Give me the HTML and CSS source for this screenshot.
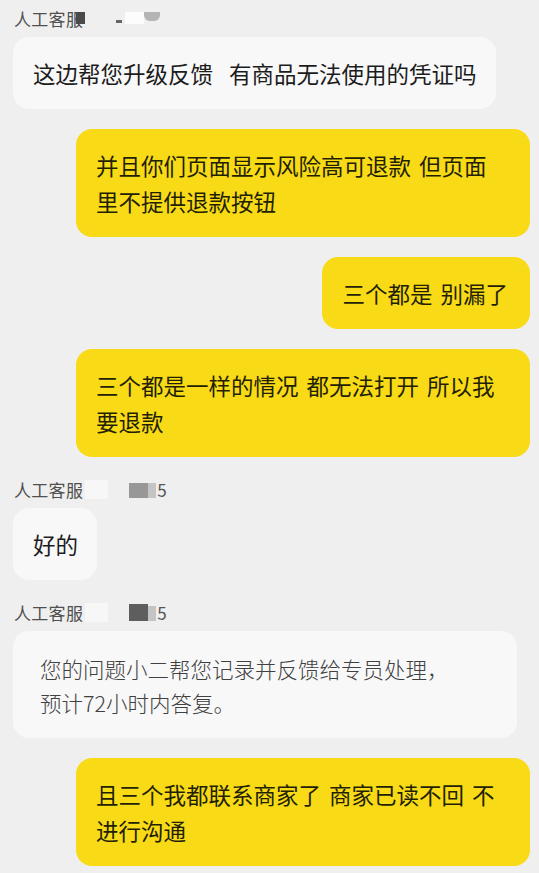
FILE: index.html
```html
<!DOCTYPE html>
<html lang="zh-CN">
<head>
    <meta charset="UTF-8">
    <title>人工客服</title>
    <link rel="stylesheet" href="styles.css">
</head>
<body>
    <div class="chat">
        <div class="group">
            <div class="name">
                <span class="name-text">人工客服</span>
                <span class="mask mask-dark mask-over"></span>
                <span class="mask mask-dash"></span>
                <span class="mask mask-white"></span>
                <span class="mask mask-light"></span>
            </div>
            <div class="bubble bot">这边帮您升级反馈&nbsp; 有商品无法使用的凭证吗</div>
        </div>

        <div class="bubble me">并且你们页面显示风险高可退款 但页面里不提供退款按钮</div>
        <div class="bubble me">三个都是 别漏了</div>
        <div class="bubble me">三个都是一样的情况 都无法打开 所以我要退款</div>

        <div class="group">
            <div class="name">
                <span class="name-text">人工客服</span>
                <span class="mask mask-blank"></span>
                <span class="mask mask-mid"></span>
                <span class="mask mask-tail"></span>
                <span class="name-num">5</span>
            </div>
            <div class="bubble bot">好的</div>
        </div>

        <div class="group">
            <div class="name">
                <span class="name-text">人工客服</span>
                <span class="mask mask-blank"></span>
                <span class="mask mask-deep"></span>
                <span class="mask mask-tail"></span>
                <span class="name-num">5</span>
            </div>
            <div class="bubble card">您的问题小二帮您记录并反馈给专员处理，<br>预计72小时内答复。</div>
        </div>

        <div class="bubble me">且三个我都联系商家了 商家已读不回 不进行沟通</div>
    </div>
</body>
</html>
```

FILE: styles.css
```css
body {
    margin: 0;
    padding: 0;
    background-color: #efefef;
    font-family: "Noto Sans CJK SC", "Noto Sans", sans-serif;
    height: 873px;
    overflow: hidden;
}

.chat {
    display: flex;
    flex-direction: column;
    gap: 20px;
    padding: 6px 9px 0 13px;
}

.group {
    display: flex;
    flex-direction: column;
    align-items: flex-start;
    gap: 7px;
}

/* nom de l'agent + zones masquées */
.name {
    display: flex;
    align-items: center;
    height: 24px;
    padding-left: 1px;
    font-size: 17px;
    color: #505050;
}

.name-text {
    letter-spacing: 0.3px;
}

.name-num {
    margin-left: 1px;
    color: #555;
}

.mask {
    display: inline-block;
    height: 12px;
}

.mask-over {
    width: 9px;
    margin-left: -7px;
    background-color: #4a4a4a;
}

.mask-dash {
    width: 6px;
    height: 3px;
    margin-left: 31px;
    margin-top: 6px;
    background-color: #666;
}

.mask-white {
    width: 19px;
    margin-left: 3px;
    background-color: #fcfcfc;
}

.mask-light {
    width: 16px;
    height: 9px;
    margin-top: -3px;
    background-color: #b4b4b4;
    border-radius: 0 0 6px 6px;
}

.mask-blank {
    width: 23px;
    height: 19px;
    margin-left: 2px;
    background-color: #f7f7f7;
}

.mask-mid {
    width: 19px;
    height: 15px;
    margin-left: 21px;
    margin-top: 3px;
    background-color: #979797;
}

.mask-deep {
    width: 19px;
    height: 17px;
    margin-left: 21px;
    background-color: #5e5e5e;
}

.mask-tail {
    width: 8px;
    height: 15px;
    margin-top: 3px;
    background-color: #c4c4c4;
}

/* bulles */
.bubble {
    box-sizing: border-box;
    padding: 18px 22px 18px 20px;
    border-radius: 16px;
    font-size: 22.5px;
    line-height: 36px;
    word-spacing: 3px;
    color: #1c1c1c;
}

.bot {
    align-self: flex-start;
    background-color: #f8f8f8;
    padding-right: 19px;
}

.me {
    align-self: flex-end;
    max-width: 454px;
    background-color: #f8da16;
    color: #231f05;
}

.card {
    width: 504px;
    padding: 21px 27px 18px 27px;
    background-color: #f8f8f8;
    font-size: 21.5px;
    font-weight: 300;
    line-height: 34px;
    color: #404040;
}
```
